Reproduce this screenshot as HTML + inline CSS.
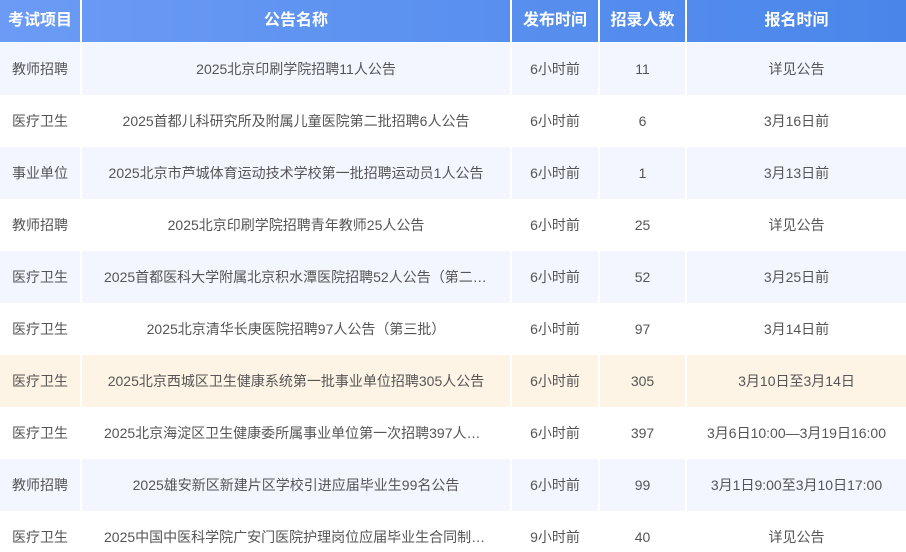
<!DOCTYPE html>
<html><head><meta charset="utf-8"><style>
html,body{margin:0;padding:0;background:#fff;width:906px;height:552px;overflow:hidden}
table{border-collapse:separate;border-spacing:0;table-layout:fixed;width:906px;font-family:"Liberation Sans","Noto Sans CJK SC",sans-serif}
th{height:43px;color:#fff;font-size:16px;font-weight:bold;padding:0 0 7px 0;box-sizing:border-box;border-right:2px solid #fff;border-bottom:1px solid #fff}
th:last-child,td:last-child{border-right:none}
thead tr{background:linear-gradient(90deg,#6b9bf5,#4a86ea)}
td{height:52px;padding:0 22px;font-size:14px;color:#555;text-align:center;white-space:nowrap;overflow:hidden;text-overflow:ellipsis;border-right:2px solid #fff;box-sizing:border-box}
td:first-child{padding:0}
td:nth-child(n+3){padding:0 2px}
tr.s td{background:#f3f6fe}
tr.h td{background:#fdf4e6}
</style></head><body>
<table>
<colgroup><col style="width:82px"><col style="width:430px"><col style="width:88px"><col style="width:87px"><col style="width:219px"></colgroup>
<thead><tr><th>考试项目</th><th>公告名称</th><th>发布时间</th><th>招录人数</th><th>报名时间</th></tr></thead>
<tbody>
<tr class="s"><td>教师招聘</td><td>2025北京印刷学院招聘11人公告</td><td>6小时前</td><td>11</td><td>详见公告</td></tr>
<tr><td>医疗卫生</td><td>2025首都儿科研究所及附属儿童医院第二批招聘6人公告</td><td>6小时前</td><td>6</td><td>3月16日前</td></tr>
<tr class="s"><td>事业单位</td><td>2025北京市芦城体育运动技术学校第一批招聘运动员1人公告</td><td>6小时前</td><td>1</td><td>3月13日前</td></tr>
<tr><td>教师招聘</td><td>2025北京印刷学院招聘青年教师25人公告</td><td>6小时前</td><td>25</td><td>详见公告</td></tr>
<tr class="s"><td>医疗卫生</td><td>2025首都医科大学附属北京积水潭医院招聘52人公告（第二批）</td><td>6小时前</td><td>52</td><td>3月25日前</td></tr>
<tr><td>医疗卫生</td><td>2025北京清华长庚医院招聘97人公告（第三批）</td><td>6小时前</td><td>97</td><td>3月14日前</td></tr>
<tr class="h"><td>医疗卫生</td><td>2025北京西城区卫生健康系统第一批事业单位招聘305人公告</td><td>6小时前</td><td>305</td><td>3月10日至3月14日</td></tr>
<tr><td>医疗卫生</td><td>2025北京海淀区卫生健康委所属事业单位第一次招聘397人公告</td><td>6小时前</td><td>397</td><td>3月6日10:00—3月19日16:00</td></tr>
<tr class="s"><td>教师招聘</td><td>2025雄安新区新建片区学校引进应届毕业生99名公告</td><td>6小时前</td><td>99</td><td>3月1日9:00至3月10日17:00</td></tr>
<tr><td>医疗卫生</td><td>2025中国中医科学院广安门医院护理岗位应届毕业生合同制人员招聘公告</td><td>9小时前</td><td>40</td><td>详见公告</td></tr>
</tbody></table>
</body></html>
